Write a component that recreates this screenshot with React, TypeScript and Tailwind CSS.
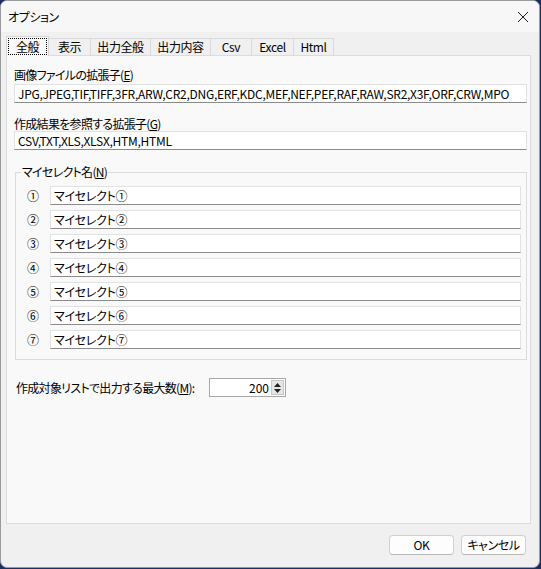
import React from "react"

const font = {
  fontFamily: '"Noto Sans CJK JP", "Noto Sans", sans-serif',
}

const tabs = [
  { label: "全般", w: "w-[43px]" },
  { label: "表示", w: "w-[42px]" },
  { label: "出力全般", w: "w-[60px]" },
  { label: "出力内容", w: "w-[60px]" },
  { label: "Csv", w: "w-[41px]" },
  { label: "Excel", w: "w-[42px]" },
  { label: "Html", w: "w-[40px]" },
]

const marks = ["①", "②", "③", "④", "⑤", "⑥", "⑦"]

function TextBox({ value, className }: { value: string; className?: string }) {
  return (
    <div
      className={
        "h-[19px] bg-white border border-[#e2e2e2] border-b-[#8a8a8a] flex items-center px-[3px] text-[12px] leading-none text-black whitespace-nowrap overflow-hidden " +
        (className ?? "")
      }
    >
      {value}
    </div>
  )
}

function Btn({ children }: { children: React.ReactNode }) {
  return (
    <div className="w-[65px] h-[20px] rounded-[4px] border border-[#d0d0d0] border-b-[#b8b8b8] bg-[#fdfdfd] flex items-center justify-center text-[12px] leading-none tracking-[-0.4px]">
      {children}
    </div>
  )
}

export default function App() {
  return (
    <div
      className="w-[541px] h-[569px] bg-[#1b2f63] [font-feature-settings:'palt']"
      style={font}
    >
      <div className="w-[540px] h-[568px] rounded-[7px] border border-[#9a9a9a] bg-[#f0f0f0] overflow-hidden flex flex-col text-black">
        {/* title bar */}
        <div className="h-[31px] shrink-0 bg-[#f7f7f7] flex items-center justify-between pl-[7px] pr-[10px]">
          <span className="text-[12px] leading-none tracking-[-0.4px]">オプション</span>
          <svg width="12" height="12" viewBox="0 0 12 12">
            <path d="M1 1 L11 11 M11 1 L1 11" stroke="#1a1a1a" strokeWidth="1" />
          </svg>
        </div>

        {/* tabs */}
        <div className="flex items-end h-[23px] pl-[5px] shrink-0 tracking-[-0.4px]">
          {tabs.map((t, i) =>
            i === 0 ? (
              <div
                key={t.label}
                className={`${t.w} h-[20px] -mb-px relative z-10 bg-[#f9f9f9] border border-[#d6d6d6] border-b-0 p-px`}
              >
                <div className="w-full h-full border border-dotted border-black flex items-center justify-center text-[12px] leading-none">
                  {t.label}
                </div>
              </div>
            ) : (
              <div
                key={t.label}
                className={`${t.w} h-[17px] bg-[#f0f0f0] border border-[#dadada] border-b-0 border-l-0 flex items-center justify-center text-[12px] leading-none`}
              >
                {t.label}
              </div>
            ),
          )}
        </div>

        {/* panel */}
        <div className="ml-[5px] w-[525px] h-[469px] shrink-0 bg-[#f9f9f9] border border-[#dcdcdc] pl-[7px] pr-[3px] flex flex-col text-[12px]">
          <div className="mt-[11px] h-[16px] leading-[16px] tracking-[-0.7px]">
            画像ファイルの拡張子(<span className="underline">E</span>)
          </div>
          <TextBox
            className="mt-[1px] tracking-[-0.27px]"
            value="JPG,JPEG,TIF,TIFF,3FR,ARW,CR2,DNG,ERF,KDC,MEF,NEF,PEF,RAF,RAW,SR2,X3F,ORF,CRW,MPO"
          />
          <div className="mt-[13px] h-[16px] leading-[16px] tracking-[-0.7px]">
            作成結果を参照する拡張子(<span className="underline">G</span>)
          </div>
          <TextBox className="mt-[-1px] tracking-[-0.27px]" value="CSV,TXT,XLS,XLSX,HTM,HTML" />

          {/* group box */}
          <div className="mt-[22px] ml-[1px] h-[188px] border border-[#dcdcdc] relative flex flex-col pl-[7px] pr-[5px] pt-[13px] gap-[5px]">
            <div className="absolute -top-[9px] left-[5px] bg-[#f9f9f9] px-[1px] h-[16px] leading-[16px] tracking-[-0.7px]">
              マイセレクト名(<span className="underline">N</span>)
            </div>
            {marks.map((m) => (
              <div key={m} className="flex items-center">
                <div className="w-[27px] pl-[4px] text-[12px] leading-none">{m}</div>
                <TextBox className="flex-1 tracking-[-0.3px]" value={`マイセレクト${m}`} />
              </div>
            ))}
          </div>

          {/* max count */}
          <div className="mt-[18px] flex items-center">
            <div className="w-[195px] pl-[2px] leading-[16px] tracking-[-0.7px]">
              作成対象リストで出力する最大数(<span className="underline">M</span>):
            </div>
            <div className="w-[77px] h-[19px] bg-white border border-[#a8a8a8] flex items-center justify-end">
              <span className="leading-none pr-[2px]">200</span>
              <div className="w-[13px] h-[15px] bg-[#e6e6e6] border border-[#c8c8c8] flex flex-col items-center justify-center gap-[2px] mr-[1px]">
                <svg width="7" height="4" viewBox="0 0 7 4">
                  <path d="M0 4 L3.5 0 L7 4 Z" fill="#222" />
                </svg>
                <svg width="7" height="4" viewBox="0 0 7 4">
                  <path d="M0 0 L3.5 4 L7 0 Z" fill="#222" />
                </svg>
              </div>
            </div>
          </div>
        </div>

        {/* footer */}
        <div className="flex justify-end gap-[7px] pr-[13px] mt-[11px]">
          <Btn>OK</Btn>
          <Btn>キャンセル</Btn>
        </div>
      </div>
    </div>
  )
}
